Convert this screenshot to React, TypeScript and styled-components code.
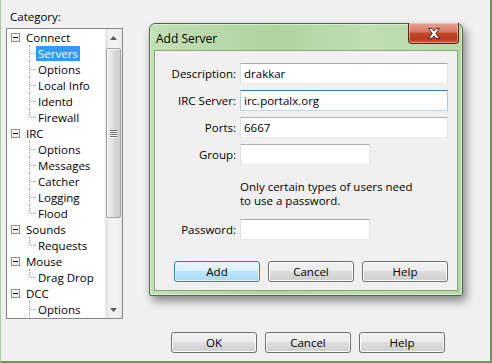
import React from "react";
import styled, { createGlobalStyle, css } from "styled-components";

const GlobalStyle = createGlobalStyle`
  html, body {
    margin: 0;
    padding: 0;
    background: #f0f0f0;
  }
  body {
    font-family: "Open Sans", "Liberation Sans", sans-serif;
    font-size: 11.5px;
    color: #000;
  }
  * {
    box-sizing: border-box;
  }
`;

type Node = { label: string; children: string[]; more?: boolean };

const tree: Node[] = [
  { label: "Connect", children: ["Servers", "Options", "Local Info", "Identd", "Firewall"] },
  { label: "IRC", children: ["Options", "Messages", "Catcher", "Logging", "Flood"] },
  { label: "Sounds", children: ["Requests"] },
  { label: "Mouse", children: ["Drag Drop"] },
  { label: "DCC", children: ["Options"], more: true },
];

const App = () => {
  return (
    <>
      <GlobalStyle />
      <Window>
        <LeftPane>
          <CategoryLabel>Category:</CategoryLabel>
          <TreeBox>
            <TreeList>
              {tree.map((node) => (
                <React.Fragment key={node.label}>
                  <TreeRow $level={0}>
                    <Expander />
                    <TreeLabel>{node.label}</TreeLabel>
                  </TreeRow>
                  {node.children.map((child, i) => (
                    <TreeRow
                      key={node.label + child}
                      $level={1}
                      $last={i === node.children.length - 1 && !node.more}
                    >
                      <TreeLabel $selected={node.label === "Connect" && child === "Servers"}>
                        {child}
                      </TreeLabel>
                    </TreeRow>
                  ))}
                </React.Fragment>
              ))}
            </TreeList>
            <ScrollBar>
              <ScrollArrow>
                <svg width="7" height="4" viewBox="0 0 7 4">
                  <path d="M0 4 L3.5 0 L7 4 Z" fill="#5a5a5a" />
                </svg>
              </ScrollArrow>
              <ScrollTrack>
                <Thumb>
                  <Grip>
                    <span />
                    <span />
                    <span />
                    <span />
                  </Grip>
                </Thumb>
              </ScrollTrack>
              <ScrollArrow>
                <svg width="7" height="4" viewBox="0 0 7 4">
                  <path d="M0 0 L7 0 L3.5 4 Z" fill="#5a5a5a" />
                </svg>
              </ScrollArrow>
            </ScrollBar>
          </TreeBox>
        </LeftPane>

        <RightPane>
          <ButtonRow>
            <Button>OK</Button>
            <Button>Cancel</Button>
            <Button>Help</Button>
          </ButtonRow>
        </RightPane>

        <Dialog>
          <TitleBar>
            <Title>Add Server</Title>
            <CloseButton>
              <svg width="14" height="11" viewBox="0 0 14 11">
                <path
                  d="M1.5 0.5 H5 L7 3 L9 0.5 H12.5 L8.8 5.5 L12.5 10.5 H9 L7 8 L5 10.5 H1.5 L5.2 5.5 Z"
                  fill="#fff"
                  stroke="#5b2418"
                  strokeWidth="1"
                  strokeLinejoin="round"
                />
              </svg>
            </CloseButton>
          </TitleBar>
          <Client>
            <Form>
              <FieldLabel>Description:</FieldLabel>
              <Input defaultValue="drakkar" />
              <FieldLabel>IRC Server:</FieldLabel>
              <Input defaultValue="irc.portalx.org" $focused />
              <FieldLabel>Ports:</FieldLabel>
              <Input defaultValue="6667" />
              <FieldLabel>Group:</FieldLabel>
              <Input defaultValue="" $short />
              <span />
              <Note>
                Only certain types of users need
                <br />
                to use a password.
              </Note>
              <FieldLabel>Password:</FieldLabel>
              <Input defaultValue="" type="password" $short />
            </Form>
            <DialogButtons>
              <Button $default>Add</Button>
              <Button>Cancel</Button>
              <Button>Help</Button>
            </DialogButtons>
          </Client>
        </Dialog>
      </Window>
    </>
  );
};

const Window = styled.div`
  position: relative;
  width: 492px;
  height: 363px;
  display: grid;
  grid-template-columns: 122px 1fr;
  background: #f0f0f0;
  border-left: 1px solid #b3cba5;
  border-right: 2px solid #6f9658;
  border-bottom: 2px solid #6f9658;
  overflow: hidden;
`;

const LeftPane = styled.div`
  display: flex;
  flex-direction: column;
  padding: 9px 0 0 5px;
`;

const CategoryLabel = styled.div`
  padding-left: 4px;
  line-height: 16px;
  margin-bottom: 3px;
`;

const TreeBox = styled.div`
  display: flex;
  width: 117px;
  height: 291px;
  border: 1px solid #828790;
  background: #fff;
`;

const TreeList = styled.div`
  flex: 1;
  overflow: hidden;
`;

const TreeRow = styled.div<{ $level: number; $last?: boolean }>`
  position: relative;
  height: 16px;
  display: flex;
  align-items: center;
  gap: 4px;
  padding-left: ${(p) => (p.$level === 0 ? 4 : 29)}px;
  white-space: nowrap;

  ${(p) =>
    p.$level === 1 &&
    css`
      &::before {
        content: "";
        position: absolute;
        left: 22px;
        top: 0;
        height: ${p.$last ? "8px" : "16px"};
        border-left: 1px dotted #a0a0a0;
      }
      &::after {
        content: "";
        position: absolute;
        left: 24px;
        top: 8px;
        width: 5px;
        border-top: 1px dotted #a0a0a0;
      }
    `}
`;

const Expander = styled.span`
  position: relative;
  width: 9px;
  height: 9px;
  flex: none;
  border: 1px solid #919191;
  background: linear-gradient(180deg, #fff 0%, #f3f3f3 60%, #e4e4e4 100%);

  &::after {
    content: "";
    position: absolute;
    left: 1px;
    top: 3px;
    width: 5px;
    height: 1px;
    background: #000;
  }
`;

const TreeLabel = styled.span<{ $selected?: boolean }>`
  padding: 0 2px;
  line-height: 15px;
  background: ${(p) => (p.$selected ? "#3399ff" : "transparent")};
  color: ${(p) => (p.$selected ? "#fff" : "#000")};
`;

const ScrollBar = styled.div`
  width: 17px;
  display: flex;
  flex-direction: column;
  background: linear-gradient(90deg, #e3e3e3 0%, #f2f2f2 30%, #f2f2f2 70%, #e9e9e9 100%);
`;

const ScrollArrow = styled.div`
  height: 17px;
  display: flex;
  align-items: center;
  justify-content: center;
`;

const ScrollTrack = styled.div`
  flex: 1;
  padding: 2px 0 0 1px;
`;

const Thumb = styled.div`
  width: 15px;
  height: 170px;
  border: 1px solid #a4a4a4;
  border-radius: 2px;
  background: linear-gradient(90deg, #ececec 0%, #e3e3e3 45%, #d6d6d6 55%, #cfcfcf 100%);
  box-shadow: inset 1px 1px 0 #f7f7f7;
  display: flex;
  align-items: center;
  justify-content: center;
`;

const Grip = styled.div`
  display: flex;
  flex-direction: column;
  gap: 1px;
  span {
    display: block;
    width: 7px;
    height: 1px;
    background: #6e6e6e;
    box-shadow: 0 1px 0 #fafafa;
  }
`;

const RightPane = styled.div`
  display: flex;
  flex-direction: column;
  justify-content: flex-end;
  padding: 0 0 8px 48px;
`;

const ButtonRow = styled.div`
  display: flex;
  gap: 8px;
`;

const Button = styled.div<{ $default?: boolean }>`
  width: 86px;
  height: 21px;
  display: flex;
  align-items: center;
  justify-content: center;
  border: 1px solid ${(p) => (p.$default ? "#3c7fb1" : "#707070")};
  border-radius: 3px;
  background: ${(p) =>
    p.$default
      ? "linear-gradient(180deg, #eaf6fd 0%, #d9f0fc 50%, #bee6fd 50%, #a7d9f5 100%)"
      : "linear-gradient(180deg, #f2f2f2 0%, #ebebeb 50%, #dddddd 50%, #cfcfcf 100%)"};
  box-shadow: inset 0 0 0 1px ${(p) => (p.$default ? "#e3f4fc" : "#fcfcfc")};
  cursor: default;
`;

const Dialog = styled.div`
  position: absolute;
  left: 148px;
  top: 23px;
  width: 314px;
  height: 273px;
  display: flex;
  flex-direction: column;
  padding: 0 4px 4px 4px;
  border: 1px solid #4c6b43;
  border-radius: 6px 6px 2px 2px;
  background: linear-gradient(90deg, #c3dfb6 0%, #b0d3a0 40%, #c0deb2 70%, #b8d8a9 100%);
  box-shadow: 3px 5px 10px rgba(0, 0, 0, 0.45), inset 0 0 0 1px rgba(255, 255, 255, 0.45);
`;

const TitleBar = styled.div`
  height: 26px;
  display: flex;
  align-items: flex-start;
  justify-content: space-between;
`;

const Title = styled.div`
  padding: 7px 0 0 2px;
  line-height: 15px;
  font-size: 12px;
  color: #000;
`;

const CloseButton = styled.div`
  width: 51px;
  height: 21px;
  margin: -1px -1px 0 0;
  display: flex;
  align-items: center;
  justify-content: center;
  border: 1px solid #5e2418;
  border-top: none;
  border-radius: 0 0 4px 4px;
  background: linear-gradient(180deg, #e7a596 0%, #d47a63 45%, #c3482c 50%, #b83a1e 80%, #d05b3a 100%);
  box-shadow: inset 0 0 0 1px rgba(255, 210, 200, 0.5);
`;

const Client = styled.div`
  flex: 1;
  display: flex;
  flex-direction: column;
  border: 1px solid #87a47b;
  background: #f0f0f0;
  padding: 12px 9px 8px 0;
`;

const Form = styled.div`
  display: grid;
  grid-template-columns: 81px 208px;
  column-gap: 4px;
  row-gap: 6px;
  align-items: center;
`;

const FieldLabel = styled.label`
  text-align: right;
`;

const Input = styled.input<{ $focused?: boolean; $short?: boolean }>`
  width: ${(p) => (p.$short ? "130px" : "208px")};
  height: 21px;
  padding: 0 3px;
  font: inherit;
  color: #000;
  background: #fff;
  outline: none;
  border: 1px solid;
  border-color: ${(p) =>
    p.$focused ? "#3d7bad #a4c9e3 #b7d9ed #b5cfe7" : "#abadb3 #e2e3ea #e3e9ef #dbdfe6"};
`;

const Note = styled.div`
  line-height: 14px;
  margin: 9px 0 5px;
`;

const DialogButtons = styled.div`
  margin-top: auto;
  display: flex;
  justify-content: flex-end;
  gap: 8px;
`;

export default App;
